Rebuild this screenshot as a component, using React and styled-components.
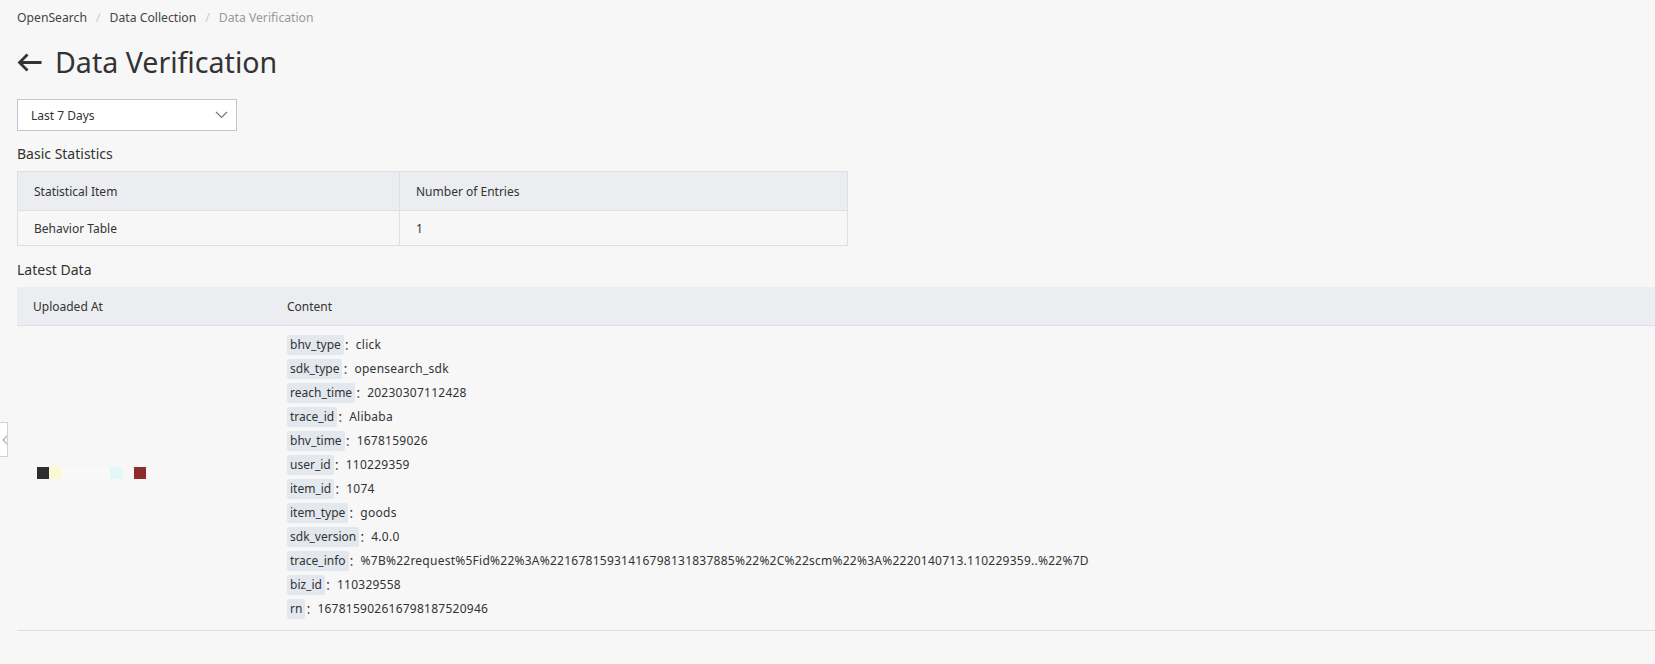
import React from "react";
import styled, { createGlobalStyle } from "styled-components";

const GlobalStyle = createGlobalStyle`
  html, body {
    margin: 0;
    padding: 0;
    background: #f7f7f7;
    overflow: hidden;
  }
  body {
    font-family: "Noto Sans", "Noto Sans CJK SC", sans-serif;
    font-size: 12px;
    color: #333;
  }
`;

const entries = [
  ["bhv_type", "click"],
  ["sdk_type", "opensearch_sdk"],
  ["reach_time", "20230307112428"],
  ["trace_id", "Alibaba"],
  ["bhv_time", "1678159026"],
  ["user_id", "110229359"],
  ["item_id", "1074"],
  ["item_type", "goods"],
  ["sdk_version", "4.0.0"],
  [
    "trace_info",
    "%7B%22request%5Fid%22%3A%22167815931416798131837885%22%2C%22scm%22%3A%2220140713.110229359..%22%7D",
  ],
  ["biz_id", "110329558"],
  ["rn", "167815902616798187520946"],
];

// redacted timestamp, drawn as the mosaic blocks seen in the screenshot
const blurBlocks = [
  { w: 12, c: "#2e2e2e" },
  { w: 12, c: "#fbf8d2" },
  { w: 49, c: "#f9f9f9" },
  { w: 12, c: "#e3f7f9" },
  { w: 12, c: "#f7f7f7" },
  { w: 12, c: "#8e2b2b" },
];

function App() {
  return (
    <>
      <GlobalStyle />
      <Page>
        <Breadcrumb>
          <Crumb>OpenSearch</Crumb>
          <Sep>/</Sep>
          <Crumb>Data Collection</Crumb>
          <Sep>/</Sep>
          <Crumb $current>Data Verification</Crumb>
        </Breadcrumb>

        <TitleRow>
          <svg width="25" height="19" viewBox="0 0 25 19">
            <path
              d="M24.5 9.5H3M10.5 1.5L2.5 9.5l8 8"
              fill="none"
              stroke="#333"
              strokeWidth="2.8"
            />
          </svg>
          <h1>Data Verification</h1>
        </TitleRow>

        <Select>
          <span>Last 7 Days</span>
          <svg width="13" height="8" viewBox="0 0 13 8">
            <path d="M1 1l5.5 5.5L12 1" fill="none" stroke="#777" strokeWidth="1.2" />
          </svg>
        </Select>

        <SectionTitle>Basic Statistics</SectionTitle>
        <StatTable>
          <thead>
            <tr>
              <th>Statistical Item</th>
              <th>Number of Entries</th>
            </tr>
          </thead>
          <tbody>
            <tr>
              <td>Behavior Table</td>
              <td>1</td>
            </tr>
          </tbody>
        </StatTable>

        <SectionTitle $gap="14px">Latest Data</SectionTitle>
        <DataTable>
          <thead>
            <tr>
              <th>Uploaded At</th>
              <th>Content</th>
            </tr>
          </thead>
          <tbody>
            <tr>
              <td>
                <Blur>
                  {blurBlocks.map((b, i) => (
                    <BlurBlock key={i} $w={b.w} $c={b.c} />
                  ))}
                </Blur>
              </td>
              <td>
                <EntryList>
                  {entries.map(([k, v]) => (
                    <Entry key={k}>
                      <Key>{k}</Key>
                      <Colon>：</Colon>
                      <Value>{v}</Value>
                    </Entry>
                  ))}
                </EntryList>
              </td>
            </tr>
          </tbody>
        </DataTable>
      </Page>
      <SideTab>
        <svg width="8" height="12" viewBox="0 0 8 12">
          <path d="M7 1L2 6l5 5" fill="none" stroke="#aab" strokeWidth="1.2" />
        </svg>
      </SideTab>
    </>
  );
}

const Page = styled.div`
  padding: 8px 0 0 17px;
  min-height: 664px;
  box-sizing: border-box;
`;

const Breadcrumb = styled.div`
  display: flex;
  align-items: center;
  height: 20px;
  line-height: 20px;
  font-size: 12.2px;
`;

const Crumb = styled.span`
  color: ${(p) => (p.$current ? "#999" : "#444")};
`;

const Sep = styled.span`
  color: #ccc;
  margin: 0 9px;
`;

const TitleRow = styled.div`
  display: flex;
  align-items: center;
  gap: 13px;
  height: 40px;
  margin-top: 14px;
  svg {
    margin-top: 1px;
  }
  h1 {
    margin: 0;
    font-size: 28.6px;
    font-weight: 400;
    color: #333;
    line-height: 40px;
  }
`;

const Select = styled.div`
  width: 220px;
  height: 32px;
  box-sizing: border-box;
  margin-top: 17px;
  border: 1px solid #c4c6cc;
  background: #fff;
  display: flex;
  align-items: center;
  justify-content: space-between;
  padding: 0 8px 0 13px;
  color: #333;
`;

const SectionTitle = styled.div`
  font-size: 14px;
  line-height: 20px;
  margin-top: ${(p) => p.$gap || "13px"};
  margin-bottom: 7px;
  color: #333;
`;

const StatTable = styled.table`
  width: 831px;
  border-collapse: collapse;
  table-layout: fixed;
  th,
  td {
    border: 1px solid #dcdfe4;
    text-align: left;
    font-weight: 400;
    padding: 0 16px;
    color: #333;
  }
  th {
    height: 38px;
    background: #ebedf1;
  }
  td {
    height: 34px;
  }
  th:first-child,
  td:first-child {
    width: 349px;
  }
`;

const DataTable = styled.table`
  width: calc(100% + 40px);
  border-collapse: collapse;
  table-layout: fixed;
  th,
  td {
    text-align: left;
    font-weight: 400;
    color: #333;
    padding: 0 16px;
    border-bottom: 1px solid #dcdfe4;
  }
  th {
    height: 38px;
    background: #ebedf1;
  }
  th:first-child,
  td:first-child {
    width: 222px;
  }
  td {
    vertical-align: middle;
    padding-top: 9px;
    padding-bottom: 11px;
  }
`;

const Blur = styled.div`
  display: flex;
  align-items: center;
  margin-left: 4px;
  margin-top: -8px;
  height: 12px;
`;

const BlurBlock = styled.span`
  display: inline-block;
  width: ${(p) => p.$w}px;
  height: 12px;
  background: ${(p) => p.$c};
`;

const EntryList = styled.div`
  display: flex;
  flex-direction: column;
  gap: 4px;
`;

const Entry = styled.div`
  display: flex;
  align-items: center;
  height: 20px;
  line-height: 20px;
  white-space: nowrap;
`;

const Key = styled.span`
  background: #e2e8ee;
  padding: 0 3px;
  border-radius: 2px;
`;

const Colon = styled.span`
  font-family: "Noto Sans CJK SC", sans-serif;
  width: 12px;
  overflow: hidden;
`;

const Value = styled.span`
  letter-spacing: 0.25px;
`;

const SideTab = styled.div`
  position: absolute;
  left: -1px;
  top: 422px;
  width: 8px;
  height: 33px;
  background: #fff;
  border: 1px solid #cfd2d8;
  border-left: none;
  display: flex;
  align-items: center;
  justify-content: flex-end;
  overflow: hidden;
  svg {
    margin-right: -2px;
  }
`;

export default App;
